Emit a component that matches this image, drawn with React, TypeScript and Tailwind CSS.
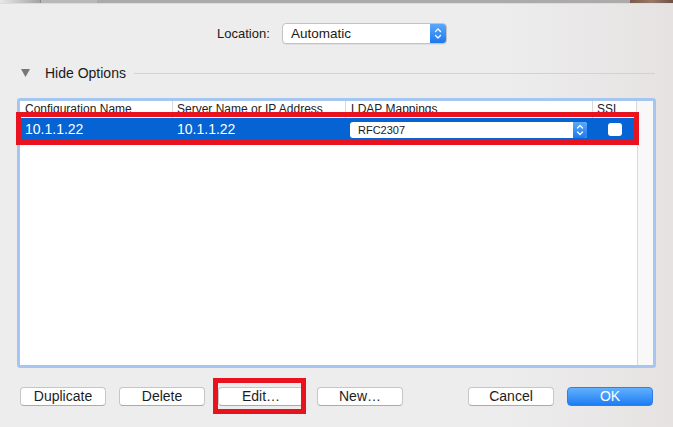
import React from "react";

function Stepper({ w, h }: { w: number; h: number }) {
  return (
    <svg width={w} height={h} viewBox={`0 0 ${w} ${h}`} className="block">
      <path
        d={`M${w / 2 - 2.5} ${h / 2 - 2} L${w / 2} ${h / 2 - 4.5} L${w / 2 + 2.5} ${h / 2 - 2}`}
        fill="none"
        stroke="white"
        strokeWidth="1.3"
        strokeLinecap="round"
        strokeLinejoin="round"
      />
      <path
        d={`M${w / 2 - 2.5} ${h / 2 + 2} L${w / 2} ${h / 2 + 4.5} L${w / 2 + 2.5} ${h / 2 + 2}`}
        fill="none"
        stroke="white"
        strokeWidth="1.3"
        strokeLinecap="round"
        strokeLinejoin="round"
      />
    </svg>
  );
}

function Button({ label, primary }: { label: string; primary?: boolean }) {
  return (
    <div
      className={
        primary
          ? "flex h-[19px] w-[86px] items-center justify-center rounded-[4px] border border-[#2f7fe6] bg-linear-to-b from-[#61b0fd] to-[#1b7df4] text-[14px] text-white"
          : "flex h-[19px] w-[86px] items-center justify-center rounded-[4px] border border-[#c6c6c6] border-b-[#aaaaaa] bg-white text-[14px] text-[#1d1d1d]"
      }
    >
      {label}
    </div>
  );
}

export default function App() {
  return (
    <div className="relative h-[427px] w-[673px] overflow-hidden bg-linear-to-r from-[#ededed] from-75% to-[#e6e2e2] font-['Liberation_Sans',Arial,sans-serif]">
      {/* window edge above the sheet */}
      <div className="flex h-[3px]">
        <div className="w-[40px] bg-linear-to-r from-[#e8e8e8] to-[#a4a4a4]" />
        <div className="w-[1px] bg-[#8a8a8a]" />
        <div className="w-[56px] bg-[#b8b8b8]" />
        <div className="w-[533px] bg-[#ababab]" />
        <div className="flex-1 bg-linear-to-r from-[#7a5a4c] via-[#9c7a6a] to-[#6e5046]" />
      </div>
      <div className="h-[1px] bg-[#dcdcdc]" />

      {/* location */}
      <div className="mt-[19px] flex h-[21px] items-center pl-[217px]">
        <span className="w-[56px] text-[13px] text-[#1a1a1a]">Location:</span>
        <div className="ml-[9px] flex h-[21px] w-[165px] overflow-hidden rounded-[4px] border border-[#c3c3c3] bg-white shadow-[0_1px_0_rgba(0,0,0,0.06)]">
          <span className="flex-1 pl-[8px] text-[13.5px] leading-[19px] text-[#1a1a1a]">
            Automatic
          </span>
          <div className="w-[16px] bg-linear-to-b from-[#5aa9fb] to-[#1a78f0]">
            <Stepper w={16} h={19} />
          </div>
        </div>
      </div>

      {/* hide options */}
      <div className="mt-[22px] flex h-[14px] items-center pl-[21px] pr-[18px]">
        <svg width="9" height="8" viewBox="0 0 9 8" className="block">
          <path d="M0 0 L9 0 L4.5 8 Z" fill="#777777" />
        </svg>
        <span className="ml-[15px] text-[14px] text-[#1a1a1a]">Hide Options</span>
        <div className="ml-[8px] h-[1px] flex-1 bg-[#d2d2d2]" />
      </div>

      {/* table */}
      <div className="mx-[17px] mt-[18px] flex h-[270px] flex-col rounded-[3px] border-[3px] border-[#a6c6f2] bg-white">
        <div className="flex h-[17px] text-[12px] leading-[14px] text-[#222222]">
          <div className="w-[153px] border-r border-[#d9d9d9] pl-[5px] pt-[1px]">Configuration Name</div>
          <div className="w-[173px] border-r border-[#d9d9d9] pl-[4px] pt-[1px]">Server Name or IP Address</div>
          <div className="w-[247px] border-r border-[#d9d9d9] pl-[5px] pt-[1px]">LDAP Mappings</div>
          <div className="w-[44px] border-r border-[#d9d9d9] pl-[4px] pt-[1px]">SSL</div>
          <div className="flex-1 bg-[#f8f8f8]" />
        </div>
        <div className="flex h-[23px] items-center text-[14px] text-white">
          <div className="flex h-full w-[617px] items-center bg-[#0563d3]">
            <span className="w-[153px] pl-[5px]">10.1.1.22</span>
            <span className="w-[177px] pl-[4px]">10.1.1.22</span>
            <div className="flex h-[16px] w-[237px] overflow-hidden rounded-[3px] bg-white">
              <span className="flex-1 pl-[8px] text-[11px] leading-[16px] text-[#1a1a1a]">RFC2307</span>
              <div className="w-[14px] bg-linear-to-b from-[#5aa9fb] to-[#1a78f0]">
                <Stepper w={14} h={16} />
              </div>
            </div>
            <div className="ml-[21px] h-[13px] w-[14px] rounded-[3px] bg-white" />
          </div>
          <div className="h-full flex-1 border-l border-[#d9d9d9] bg-[#f8f8f8]" />
        </div>
        <div className="flex flex-1">
          <div className="w-[617px]" />
          <div className="flex-1 border-l border-[#d9d9d9] bg-[#f8f8f8]" />
        </div>
      </div>

      {/* buttons */}
      <div className="mt-[19px] flex gap-[13px] px-[20px]">
        <Button label="Duplicate" />
        <Button label="Delete" />
        <Button label="Edit…" />
        <Button label="New…" />
        <div className="ml-auto flex gap-[13px]">
          <Button label="Cancel" />
          <Button label="OK" primary />
        </div>
      </div>

      {/* red annotation boxes */}
      <div className="absolute left-[16px] top-[112px] h-[33px] w-[623px] border-[5px] border-[#e8131f]" />
      <div className="absolute left-[213px] top-[378px] h-[36px] w-[93px] border-[5px] border-[#e8131f]" />
    </div>
  );
}
